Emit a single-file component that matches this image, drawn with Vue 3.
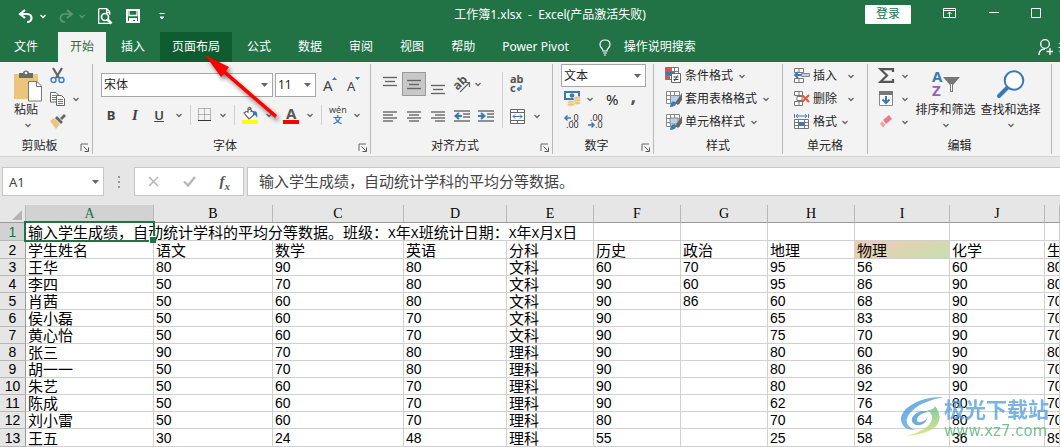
<script setup>
import { h, ref } from 'vue'

const line = (x1, y1, x2) => `<path d="M${x1} ${y1}H${x2}" />`
const bars = (rows) =>
  `<g stroke="#666" stroke-width="1.4">${rows.map(([a, y, b]) => line(a, y, b)).join('')}</g>`

const tableGrid =
  '<path d="M1.5 1.5h13v12h-13zM1.5 5.5h13M1.5 9.5h13M5.5 1.5v12M9.5 1.5v12" fill="#fff" stroke="#888"/>'
const brush =
  '<path d="M17 3v7l-4 5-3-2z" fill="#666"/><path d="M5 17c1-6 3-6 5-5 2 1 1 5-5 5z" fill="#3a78b8"/>'

const shapes = {
  chevron: '<path d="M1.5 2l2.5 2.5L6.500 2" fill="none" stroke="currentColor" stroke-width="1.3"/>',
  caret: '<path d="M0 1h7L3.500 5z" fill="#666"/>',
  launcher:
    '<path d="M1 8V1h7" fill="none" stroke="#666"/><path d="M3.500 3.500l4 4M8.500 4.500v4h-4" fill="none" stroke="#555"/>',
  undo: '<path d="M7 1L2 5l5 4M2 5h7c6 0 6 8 0 8" fill="none" stroke="#fff" stroke-width="2.200"/>',
  redo: '<path d="M10 1l5 4-5 4M15 5H8c-6 0-6 8 0 8" fill="none" stroke="#5b9a74" stroke-width="1.700"/>',
  preview:
    '<path d="M.7 .7h8l3 3v3M.7 .7v14.600h11M8.700 .7v4h3" fill="none" stroke="#fff" stroke-width="1.300"/><circle cx="7" cy="9" r="3.500" fill="none" stroke="#fff" stroke-width="1.700"/><path d="M9.500 11.500l4 4" stroke="#fff" stroke-width="2.600"/>',
  save: '<path d="M1 1h12v12H1z" fill="none" stroke="#fff" stroke-width="2"/><path d="M3 1v5.500h8V1" fill="none" stroke="#fff" stroke-width="1.300"/><path d="M3 9h8v4H9v-2H7v2H3z" fill="#fff"/>',
  customize: '<path d="M.5 .5h5M1 4h4L3 6z" stroke="#fff" fill="#fff"/>',
  ribbonBox:
    '<path d="M.5 .5h12v9H.5zM.5 2.500h12M6.500 9V4M4.500 6l2-2 2 2" fill="none" stroke="#fff"/>',
  minimize: '<path d="M0 4.500h10" stroke="#fff"/>',
  maximize: '<path d="M.5 .5h9v9h-9z" fill="none" stroke="#fff"/>',
  bulb: '<path d="M4 12c0-3-3-3-3-6.500C1 2.500 3 1 6 1s5 1.500 5 4.500C11 9 8 9 8 12zM4 14h4M5 16h2" fill="none" stroke="#fff" stroke-width="1.200"/>',
  person:
    '<circle cx="7" cy="5" r="4.300" fill="none" stroke="#fff" stroke-width="1.300"/><path d="M1 16c0-4 2-6 6-6M12 9v7M8.500 12.500h6.500" fill="none" stroke="#fff" stroke-width="1.300"/>',
  paste:
    '<path d="M1 4h24v25H1z" fill="#ecc47e"/><path d="M6 8V3h4c0-3.500 6-3.500 6 0h4v5z" fill="#6b6b6b"/><circle cx="13" cy="3" r="1.300" fill="#f3f3f3"/><path d="M15.500 11.500h8.500l4.500 4.500v15h-13z" fill="#fff" stroke="#777"/><path d="M23.500 11.500v5h5" fill="none" stroke="#777"/>',
  cut: '<path d="M3 0l6 10M12 0L6 10" stroke="#666" stroke-width="2.300"/><circle cx="3.500" cy="12" r="2.500" fill="none" stroke="#3f7dbd" stroke-width="1.400"/><circle cx="11.500" cy="12" r="2.500" fill="none" stroke="#3f7dbd" stroke-width="1.400"/>',
  copy: '<path d="M.5 .5H6l2.500 2.500v7h-8z" fill="#fff" stroke="#666"/><path d="M2 3.500h4M2 5.500h4M2 7.500h4" stroke="#3f7dbd"/><path d="M6.500 3.500h5l3 3v7h-8z" fill="#fff" stroke="#666"/><path d="M8 7.500h5M8 9.500h5M8 11.500h5" stroke="#3f7dbd"/>',
  painter:
    '<path d="M0 7l4-3 6 6-4 5z" fill="#ecc47e"/><path d="M5 4l2-2 6 6-2 2zM10 4l4-4 2 2-4 4z" fill="#666"/>',
  grow: '<text x="0" y="15" font-size="15" fill="#444">A</text><path d="M9 4l2.500-3L14 4z" fill="#3a78b8"/>',
  shrink: '<text x="0" y="15" font-size="13" fill="#444">A</text><path d="M8 1h5l-2.500 3z" fill="#3a78b8"/>',
  borders:
    '<path d="M.5 .5h12v12H.5zM6.500 .5v12M.5 6.500h12" fill="none" stroke="#777" stroke-dasharray="1 1"/><path d="M0 12.500h13" stroke="#333"/>',
  fill: '<path d="M2 6l6-4 5 5-6 5zM6 6V1.500c0-1.500 3-1.500 3 0V5" fill="#fff" stroke="#666" stroke-width="1.200"/><path d="M11 4c4 0 5 2 4 7-1-3-2-3-4-3z" fill="#3a78b8"/><path d="M0 13h16v4H0z" fill="#ff0"/>',
  fontColor:
    '<text x="3" y="12" font-size="15" font-weight="bold" fill="#555">A</text><path d="M0 13h16v4H0z" fill="#f00"/>',
  phonetic:
    '<text x="0" y="7" font-size="9" fill="#444">wén</text><text x="4" y="17" font-size="9" font-weight="bold" fill="#3a78b8">文</text>',
  top: bars([[0, 1.5, 14], [2, 5.5, 12], [0, 9.5, 14]]),
  left: bars([[0, 1, 14], [0, 4, 10], [0, 7, 14], [0, 10, 10]]),
  center: bars([[0, 1, 14], [2, 4, 12], [0, 7, 14], [2, 10, 12]]),
  right: bars([[0, 1, 14], [4, 4, 14], [0, 7, 14], [4, 10, 14]]),
  outdent:
    bars([[0, 1, 16], [9, 4, 16], [9, 7, 16], [0, 11, 16]]) +
    '<path d="M8 6H2M5 3L1.500 6 5 9" stroke="#3a78b8" stroke-width="2" fill="none"/>',
  indent:
    bars([[0, 1, 16], [9, 4, 16], [9, 7, 16], [0, 11, 16]]) +
    '<path d="M0 6h6M3 3l3.500 3L3 9" stroke="#3a78b8" stroke-width="2" fill="none"/>',
  orient:
    '<text x="0" y="12" font-size="12" font-weight="bold" fill="#555" transform="rotate(-45 5 9)">ab</text><path d="M6 16l9-9M11 6.500h4.500V11" stroke="#666" stroke-width="1.200" fill="none"/>',
  wrap: '<text x="0" y="8" font-size="11" font-weight="bold" fill="#555">ab</text><text x="0" y="17" font-size="11" font-weight="bold" fill="#555">c</text><path d="M11 10v4H8M9.500 12L7.500 14l2 2" stroke="#3a78b8" fill="none" stroke-width="1.300"/>',
  merge:
    '<path d="M.5 .5h14v14H.5zM.5 3.500h14M.5 11.500h14M7.500 .5v3M7.500 11.500v3" fill="#fff" stroke="#666"/><path d="M3 7.500h9M5 5.500l-2 2 2 2M10 5.500l2 2-2 2" stroke="#3a78b8" fill="none"/>',
  currency:
    '<path d="M0 1h16v9H0z" fill="#3a78b8"/><path d="M2 3h12v5H2z" fill="#fff"/><circle cx="8" cy="5.500" r="2.300" fill="#3a78b8"/><g fill="#ecc47e" stroke="#f3f3f3" stroke-width=".5"><ellipse cx="13" cy="8" rx="3.500" ry="1.700"/><ellipse cx="13" cy="10.500" rx="3.500" ry="1.700"/><ellipse cx="13" cy="13" rx="3.500" ry="1.700"/><ellipse cx="7" cy="12" rx="3.500" ry="1.700"/><ellipse cx="7" cy="14.500" rx="3.500" ry="1.700"/></g>',
  addDecimal:
    '<text x="7" y="7" font-size="9" fill="#333">.0</text><text x="2" y="14" font-size="9" fill="#333">.00</text><path d="M7 4H1M3.500 1.500L1 4l2.500 2.500" stroke="#3a78b8" stroke-width="1.500" fill="none"/>',
  cutDecimal:
    '<text x="2" y="7" font-size="9" fill="#333">.00</text><text x="7" y="14" font-size="9" fill="#333">.0</text><path d="M0 11h6M3.500 8.500L6 11l-2.500 2.500" stroke="#3a78b8" stroke-width="1.500" fill="none"/>',
  conditional:
    '<path d="M.5 .5h13v12H.5zM.5 4.500h13M.5 8.500h13M4.500 .5v12M9.500 .5v12" fill="#fff" stroke="#777"/><path d="M1 1h6v3H1zM1 9h3v3H1z" fill="#e0583c"/><path d="M1 5h8v3H1z" fill="#3a78b8"/><path d="M6.500 6.500h9v9h-9z" fill="#fff" stroke="#666"/><path d="M8.500 10h5M8.500 12.500h5M12.500 8.500l-3 5.500" stroke="#444"/>',
  tableStyle: tableGrid + '<path d="M6 6h8v7H6z" fill="#b9d0e6"/>' + brush,
  cellStyle: tableGrid + '<path d="M5 5h8v6H5z" fill="#b9d0e6" stroke="#888"/>' + brush,
  insertCells:
    '<path d="M.5 .5h9v4h-9zM5 .5v4M.5 10.500h9v4h-9zM5 10.500v4" fill="#fff" stroke="#777"/><path d="M7.500 5.500h8v3h-8z" fill="#b9d0e6" stroke="#888"/><path d="M7 7H1M4 4L1 7l3 3" stroke="#3a78b8" stroke-width="1.800" fill="none"/>',
  deleteCells:
    '<path d="M.5 .5h8v4h-8zM5 .5v4M.5 10.500h8v4h-8zM5 10.500v4M3 5.500h5v4H3z" fill="#fff" stroke="#777"/><path d="M8 4l7 7M15 4l-7 7" stroke="#e0583c" stroke-width="2"/>',
  formatCells:
    '<path d="M2 2h11M4 0L2 2l2 2M11 0l2 2-2 2M.5 0v4M14.500 0v4" stroke="#3a78b8" fill="none"/><path d="M.5 5.500h14v9H.5zM.5 8.500h14M.5 11.500h14M4.500 5.500v9M10.500 5.500v9" fill="#fff" stroke="#777"/><path d="M5 8h5v4H5z" fill="#3a78b8"/>',
  sum: '<path d="M14 4V1.200H1.500L8 7.500 1.500 13.800H14V11" fill="none" stroke="#555" stroke-width="2.200"/>',
  fillDown:
    '<path d="M.5 .5h13v14H.5z" fill="#fff" stroke="#888"/><path d="M0 0h14v4H0z" fill="#777"/><path d="M7 5v7M3.500 8.500L7 12l3.500-3.500" stroke="#3a78b8" stroke-width="2" fill="none"/>',
  eraser: '<path d="M4 5l6-5 3 4-6 5z" fill="#e8798f"/><path d="M3 6l3.500 4L4 12.500 1 9z" fill="#f0a3b1"/>',
  sort: '<text x="1" y="12" font-size="15" font-weight="bold" fill="#3a78b8">A</text><text x="1" y="26" font-size="15" font-weight="bold" fill="#9560b8">Z</text><path d="M12 7h17l-7 8v7h-3v-7z" fill="#777"/><path d="M20.500 14v7" stroke="#fff"/>',
  find: '<path d="M11 17L2 26" stroke="#3a78b8" stroke-width="4" stroke-linecap="round"/><circle cx="17" cy="10.500" r="9.300" fill="#fff" stroke="#3a78b8" stroke-width="2"/>',
  dots: '<path d="M1 0v2M1 5v2M1 10v2" stroke="#999" stroke-width="2"/>',
  cancel: '<path d="M1 1l9 9M10 1l-9 9" stroke="#b5b5b5" stroke-width="1.500"/>',
  enter: '<path d="M1 5.500L5 9.500 12 1" stroke="#b5b5b5" stroke-width="2.200" fill="none"/>',
  corner: '<path d="M10 0v10H0z" fill="#b4b4b4"/>',
}

const Icon = (p) =>
  h('svg', {
    width: p.w,
    height: p.h,
    viewBox: `0 0 ${p.w} ${p.h}`,
    'aria-hidden': 'true',
    innerHTML: shapes[p.n],
  })
Icon.props = ['n', 'w', 'h']
const Chev = () => h(Icon, { n: 'chevron', w: 8, h: 6, class: 'chev' })

const tabs = ['文件', '开始', '插入', '页面布局', '公式', '数据', '审阅', '视图', '帮助', 'Power Pivot']
const styleItems = [
  ['conditional', '条件格式'],
  ['tableStyle', '套用表格格式'],
  ['cellStyle', '单元格样式'],
]
const cellItems = [
  ['insertCells', '插入'],
  ['deleteCells', '删除'],
  ['formatCells', '格式'],
]
const editItems = [
  ['sum', '自动求和', 16, 15],
  ['fillDown', '填充', 14, 15],
  ['eraser', '清除', 14, 13],
]

const nameBox = ref('A1')
const formula = ref('输入学生成绩，自动统计学科的平均分等数据。')
const letters = ['A', 'B', 'C', 'D', 'E', 'F', 'G', 'H', 'I', 'J', '']
const title = '输入学生成绩，自动统计学科的平均分等数据。班级：X年X班统计日期：X年X月X日'.split(/(X)/)
const rows = [
  ['学生姓名', '语文', '数学', '英语', '分科', '历史', '政治', '地理', '物理', '化学', '生物'],
  ['王华', 80, 90, 80, '文科', 60, 70, 95, 56, 60, 80],
  ['李四', 50, 70, 80, '文科', 90, 60, 95, 86, 90, 80],
  ['肖茜', 50, 60, 80, '文科', 90, 86, 60, 68, 90, 70],
  ['侯小磊', 50, 60, 70, '文科', 90, '', 65, 83, 80, 70],
  ['黄心怡', 50, 60, 70, '文科', 90, '', 75, 70, 90, 70],
  ['张三', 90, 70, 80, '理科', 90, '', 80, 60, 90, 80],
  ['胡一一', 50, 70, 80, '理科', 90, '', 80, 86, 90, 70],
  ['朱艺', 50, 60, 70, '理科', 90, '', 80, 92, 90, 70],
  ['陈成', 50, 60, 70, '理科', 90, '', 62, 76, 80, 70],
  ['刘小雷', 50, 60, 70, '理科', 80, '', 70, 64, 80, 70],
  ['王五', 30, 24, 48, '理科', 55, '', 25, 58, 36, 89],
]
</script>

<template>
  <div class="app">
    <header class="titlebar">
      <div class="quick">
        <button class="undo" aria-label="撤消"><Icon n="undo" :w="16" :h="15" /></button>
        <Chev class="light" />
        <button class="redo" aria-label="恢复"><Icon n="redo" :w="16" :h="15" /></button>
        <Chev class="dim" />
        <button class="preview" aria-label="打印预览"><Icon n="preview" :w="14" :h="16" /></button>
        <button class="save" aria-label="保存"><Icon n="save" :w="14" :h="14" /></button>
        <button aria-label="自定义"><Icon n="customize" :w="6" :h="7" /></button>
      </div>
      <div class="doc">工作簿1.xlsx&nbsp; -&nbsp; Excel(产品激活失败)</div>
      <div class="window">
        <button class="login">登录</button>
        <button aria-label="功能区显示选项"><Icon n="ribbonBox" :w="13" :h="10" /></button>
        <button aria-label="最小化"><Icon n="minimize" :w="10" :h="10" /></button>
        <button aria-label="最大化"><Icon n="maximize" :w="10" :h="10" /></button>
      </div>
    </header>

    <nav class="tabs">
      <button v-for="t in tabs" :key="t" class="tab" :class="{ active: t === '开始', hover: t === '页面布局' }">{{ t }}</button>
      <button class="tell"><Icon n="bulb" :w="12" :h="17" />操作说明搜索</button>
      <button class="share"><Icon n="person" :w="16" :h="17" />共享</button>
    </nav>

    <section class="ribbon">
      <div class="group clipboard">
        <div class="body">
          <button class="paste"><Icon n="paste" :w="30" :h="32" /><span>粘贴</span><Chev /></button>
          <div class="stack">
            <button aria-label="剪切"><Icon n="cut" :w="15" :h="15" /></button>
            <button aria-label="复制"><Icon n="copy" :w="16" :h="14" /><Chev class="gap" /></button>
            <button aria-label="格式刷"><Icon n="painter" :w="16" :h="15" /></button>
          </div>
        </div>
        <footer><span>剪贴板</span><Icon n="launcher" :w="9" :h="9" /></footer>
      </div>

      <div class="group font">
        <div class="body column">
          <div class="line">
            <label class="combo family"><select aria-label="字体"><option>宋体</option></select><Icon n="caret" :w="7" :h="6" /></label>
            <label class="combo size"><select aria-label="字号"><option>11</option></select><Icon n="caret" :w="7" :h="6" /></label>
            <button class="grow" aria-label="增大字号"><Icon n="grow" :w="15" :h="18" /></button>
            <button aria-label="减小字号"><Icon n="shrink" :w="15" :h="18" /></button>
          </div>
          <div class="line tools">
            <button class="letter"><b>B</b></button>
            <button class="letter"><i>I</i></button>
            <button class="letter"><u>U</u></button>
            <Chev /><hr />
            <button aria-label="边框"><Icon n="borders" :w="14" :h="14" /></button>
            <Chev /><hr />
            <button aria-label="填充颜色"><Icon n="fill" :w="16" :h="17" /></button>
            <Chev />
            <button class="color" aria-label="字体颜色"><Icon n="fontColor" :w="16" :h="17" /></button>
            <Chev /><hr />
            <button aria-label="拼音"><Icon n="phonetic" :w="17" :h="19" /></button>
            <Chev />
          </div>
        </div>
        <footer><span>字体</span><Icon n="launcher" :w="9" :h="9" /></footer>
      </div>

      <div class="group align">
        <div class="body">
          <div class="column aligns">
            <div class="line">
              <button class="up" aria-label="顶端对齐"><Icon n="top" :w="14" :h="11" /></button>
              <button class="on" aria-label="垂直居中"><Icon n="top" :w="14" :h="11" /></button>
              <button class="down" aria-label="底端对齐"><Icon n="top" :w="14" :h="11" /></button>
              <button aria-label="方向"><Icon n="orient" :w="17" :h="17" /></button>
              <Chev />
            </div>
            <div class="line">
              <button aria-label="左对齐"><Icon n="left" :w="14" :h="11" /></button>
              <button aria-label="居中"><Icon n="center" :w="14" :h="11" /></button>
              <button aria-label="右对齐"><Icon n="right" :w="14" :h="11" /></button>
              <button aria-label="减少缩进"><Icon n="outdent" :w="16" :h="12" /></button>
              <button aria-label="增加缩进"><Icon n="indent" :w="16" :h="12" /></button>
            </div>
          </div>
          <hr class="tall" />
          <div class="column merges">
            <div class="line"><button aria-label="自动换行"><Icon n="wrap" :w="15" :h="18" /></button></div>
            <div class="line"><button aria-label="合并后居中"><Icon n="merge" :w="15" :h="15" /></button><Chev /></div>
          </div>
        </div>
        <footer><span>对齐方式</span><Icon n="launcher" :w="9" :h="9" /></footer>
      </div>

      <div class="group number">
        <div class="body stack">
          <label class="combo format"><select aria-label="数字格式"><option>文本</option></select><Icon n="caret" :w="7" :h="6" /></label>
          <div class="line marks">
            <button aria-label="会计数字格式"><Icon n="currency" :w="17" :h="17" /></button>
            <Chev />
            <button class="percent">%</button>
            <button class="comma">,</button>
          </div>
          <div class="line decimals">
            <button aria-label="增加小数位数"><Icon n="addDecimal" :w="16" :h="15" /></button>
            <button aria-label="减少小数位数"><Icon n="cutDecimal" :w="16" :h="15" /></button>
          </div>
        </div>
        <footer><span>数字</span><Icon n="launcher" :w="9" :h="9" /></footer>
      </div>

      <div class="group styles">
        <div class="body stack">
          <button v-for="[icon, text] in styleItems" :key="icon"><Icon :n="icon" :w="17" :h="17" />{{ text }}<Chev /></button>
        </div>
        <footer><span>样式</span></footer>
      </div>

      <div class="group cells">
        <div class="body stack">
          <button v-for="[icon, text] in cellItems" :key="icon"><Icon :n="icon" :w="16" :h="15" />{{ text }}<Chev /></button>
        </div>
        <footer><span>单元格</span></footer>
      </div>

      <div class="group editing">
        <div class="body">
          <div class="stack">
            <button v-for="[icon, text, w, ht] in editItems" :key="icon" :aria-label="text"><Icon :n="icon" :w="w" :h="ht" /><Chev /></button>
          </div>
          <button class="big"><Icon n="sort" :w="30" :h="28" /><span>排序和筛选</span><Chev /></button>
          <button class="big"><Icon n="find" :w="28" :h="28" /><span>查找和选择</span><Chev /></button>
        </div>
        <footer><span>编辑</span></footer>
      </div>
    </section>

    <section class="formula">
      <label class="combo name"><input v-model="nameBox" aria-label="名称框" /><Icon n="caret" :w="7" :h="6" /></label>
      <Icon n="dots" :w="2" :h="12" />
      <div class="actions">
        <button aria-label="取消"><Icon n="cancel" :w="11" :h="11" /></button>
        <button aria-label="输入"><Icon n="enter" :w="13" :h="11" /></button>
        <button class="fx" aria-label="插入函数"><i>f<sub>x</sub></i></button>
      </div>
      <input v-model="formula" class="entry" aria-label="编辑栏" />
    </section>

    <table class="sheet">
      <colgroup>
        <col class="c-num" /><col class="c-a" /><col class="c-b" /><col class="c-c" /><col class="c-d" />
        <col class="c-m" /><col class="c-m" /><col class="c-m" /><col class="c-m" />
        <col class="c-i" /><col class="c-i" /><col />
      </colgroup>
      <thead>
        <tr>
          <th class="corner"><Icon n="corner" :w="10" :h="10" /></th>
          <th v-for="l in letters" :key="l" scope="col" :class="{ picked: l === 'A' }">{{ l }}</th>
        </tr>
      </thead>
      <tbody>
        <tr class="roomy">
          <th scope="row" class="picked">1</th>
          <td colspan="5" class="heading">
            <template v-for="(s, i) in title" :key="i"><span v-if="s === 'X'" class="latin">X</span><template v-else>{{ s }}</template></template>
            <span class="selection"></span>
          </td>
          <td v-for="n in 6" :key="n"></td>
        </tr>
        <tr v-for="(r, i) in rows" :key="i" :class="{ roomy: i === 0 || i === 11 }">
          <th scope="row">{{ i + 2 }}</th>
          <td v-for="(v, j) in r" :key="j" :class="{ tinted: i === 0 && j === 8, digits: typeof v === 'number' }">{{ v }}</td>
        </tr>
      </tbody>
    </table>

    <svg class="pointer" width="90" height="80" viewBox="0 0 90 80" aria-hidden="true">
      <path d="M7 6l24 12-3 4 51 44-2 3-51-44-3 3z" fill="#f00" />
    </svg>

    <div class="brand">
      <svg width="44" height="44" viewBox="0 0 44 44" aria-hidden="true">
        <defs>
          <linearGradient id="sky" x2="1" y2="1"><stop stop-color="#2f86d6" /><stop offset="1" stop-color="#72bdf0" /></linearGradient>
          <linearGradient id="leaf" x2="0" y2="1"><stop stop-color="#58b989" /><stop offset="1" stop-color="#d8e064" /></linearGradient>
        </defs>
        <path d="M43 1C21 0 0 12 1 24c1 7 6 10 14 10C4 29 5 22 12 15 20 7 31 4 43 1z" fill="url(#sky)" />
        <path d="M35 10c10 13 5 28-30 30 16-3 27-11 27-18 0-4-2-6-5-8 4 0 7-1 8-4z" fill="url(#leaf)" />
        <path d="M29 16c-8-4-21 4-16 11 4 5 14 1 14-5-2 4-10 6-10 2 0-4 6-8 12-8z" fill="#3f92d8" />
      </svg>
      <div class="brand-text"><strong>极光下载站</strong><span>www.xz7.com</span></div>
    </div>
  </div>
</template>

<style>
html,
body {
  background: #fff;
  overflow: hidden;
}
</style>

<style scoped>
.app {
  position: relative;
  overflow: hidden;
  font: 12px/16px 'Noto Sans', 'Noto Sans CJK SC', sans-serif;
  color: #262626;
}
.app * {
  box-sizing: border-box;
}
svg {
  display: block;
  flex: none;
  overflow: visible;
}
button {
  display: flex;
  align-items: center;
  justify-content: center;
  flex: none;
  padding: 0;
  border: 0;
  background: none;
  font: inherit;
  color: inherit;
  white-space: nowrap;
}
input,
select {
  font: inherit;
  color: inherit;
  border: 0;
  border-radius: 0;
  background: none;
  outline: 0;
  appearance: none;
  min-width: 0;
}
hr {
  width: 1px;
  height: 20px;
  margin: 0;
  border: 0;
  background: #d0d0d0;
}
.chev {
  color: #666;
}

/* title bar */
.titlebar {
  display: flex;
  height: 32px;
  background: #217346;
  color: #fff;
}
.quick {
  display: flex;
  align-items: center;
  width: 240px;
  padding-left: 18px;
}
.undo,
.redo {
  margin-right: 5px;
}
.light {
  color: #fff;
}
.dim {
  color: #5b9a74;
}
.redo {
  margin-left: 10px;
}
.preview {
  margin-left: 12px;
}
.save {
  margin: 0 19px 0 14px;
}
.doc {
  flex: 1;
  text-align: center;
  line-height: 30px;
  white-space: nowrap;
}
.window {
  display: flex;
  justify-content: space-between;
  width: 200px;
  height: 26px;
  padding: 0 19px 0 5px;
}
.login {
  align-self: center;
  width: 46px;
  height: 19px;
  margin-top: 2px;
  border-radius: 1px;
  background: #fff;
  color: #217346;
}
.window svg {
  margin: auto;
}

/* tabs */
.tabs {
  display: flex;
  height: 30px;
  padding-left: 2px;
  background: #217346;
  color: #fff;
  overflow: hidden;
}
.tab {
  padding: 0 12px;
  margin-right: 3px;
}
.tab:first-child {
  margin-right: 8px;
}
.active {
  background: #f3f3f3;
  color: #217346;
}
.hover {
  background: #0f5c30;
}
.tell {
  gap: 13px;
  margin: 0 auto 0 15px;
}
.share {
  gap: 4px;
  width: 22px;
  justify-content: flex-start;
}

/* ribbon */
.ribbon {
  display: flex;
  height: 95px;
  padding: 2px 0;
  background: #f3f3f3;
  border-bottom: 1px solid #d2d2d2;
  color: #262626;
}
.group {
  display: flex;
  flex-direction: column;
  flex: none;
  border-right: 1px solid #b8b8b8;
}
.body {
  display: flex;
  height: 72px;
}
.column {
  display: flex;
  flex-direction: column;
}
.line {
  display: flex;
  align-items: center;
}
.stack {
  display: flex;
  flex-direction: column;
}
.stack > * {
  height: 23px;
}
.stack button {
  justify-content: flex-start;
}
footer {
  display: flex;
  align-items: center;
  padding: 0 3px;
}
footer span {
  flex: 1;
  margin-top: 2px;
  text-align: center;
}
footer svg {
  margin: 4px 0 0 4px;
}
.combo {
  display: grid;
  align-items: center;
  border: 1px solid #a6a6a6;
  background: #fff;
}
.combo > * {
  grid-area: 1 / 1;
}
.combo select,
.combo input {
  width: 100%;
  height: 100%;
  padding: 0 2px;
}
.combo svg {
  justify-self: end;
  margin-right: 4px;
}

.clipboard {
  width: 93px;
}
.paste {
  flex-direction: column;
  justify-content: flex-start;
  width: 48px;
  padding: 6px 0 0 8px;
  margin-right: 2px;
}
.paste span {
  margin: 0 4px 0 0;
}
.paste svg:last-child {
  margin-top: 4px;
}
.gap {
  margin-left: 6px;
}

.font {
  width: 278px;
}
.font .body {
  padding: 9px 0 0 8px;
}
.family {
  width: 172px;
  height: 24px;
}
.size {
  width: 41px;
  height: 24px;
  margin-left: 2px;
}
.grow {
  margin: 0 9px 0 7px;
}
.tools {
  height: 36px;
  gap: 7px;
  padding-left: 2px;
  color: #444;
}
.letter {
  width: 16px;
  margin-right: 1px;
  font-size: 13px;
}
.letter u {
  font-weight: 600;
}
.letter i {
  font-family: 'Liberation Serif', serif;
  font-weight: bold;
  font-size: 15px;
}
.color {
  margin-left: 3px;
}

.align {
  width: 182px;
}
.align .line {
  height: 32px;
}
.align .body {
  padding-top: 4px;
}
.aligns {
  width: 131px;
  padding-left: 7px;
}
.aligns button {
  width: 24px;
}
.up {
  padding-bottom: 6px;
}
.down {
  padding-top: 10px;
}
.on {
  height: 24px;
  background: #c8c8c8;
  border: 1px solid #999;
}
.tall {
  height: 56px;
  margin-top: 4px;
}
.merges {
  padding-left: 7px;
}
.merges button + svg {
  margin-left: 8px;
}

.number {
  width: 101px;
}
.number .body {
  padding-left: 8px;
}
.format {
  width: 85px;
}
.marks,
.decimals {
  padding-left: 3px;
}
.marks {
  gap: 5px;
}
.percent {
  font-size: 15px;
  margin: 0 7px;
}
.comma {
  font-size: 20px;
  font-weight: bold;
  color: #555;
  line-height: 10px;
  padding-bottom: 8px;
}
.decimals {
  gap: 8px;
}

.styles {
  width: 129px;
}
.styles .body {
  padding-left: 11px;
}
.styles button,
.cells button {
  gap: 3px;
}
.styles button svg:last-child {
  margin-left: 2px;
}
.cells {
  width: 85px;
}
.cells .body {
  padding-left: 11px;
}
.cells button svg:last-child {
  margin-left: 7px;
}
.cells button:last-child svg:last-child {
  margin-left: 1px;
}

.editing {
  width: 184px;
}
.editing .body {
  padding-left: 11px;
}
.editing .stack {
  width: 34px;
}
.editing .stack button {
  justify-content: space-between;
  width: 30px;
}
.big {
  flex-direction: column;
  justify-content: flex-start;
  width: 65px;
  padding-top: 6px;
}
.big span {
  margin: 4px 0;
}

/* formula bar */
.formula {
  display: flex;
  align-items: center;
  height: 48px;
  padding: 10px 0 9px 2px;
  background: #e6e6e6;
}
.formula > .combo,
.actions,
.entry {
  height: 29px;
  border: 1px solid #c6c6c6;
  background: #fff;
}
.name {
  width: 102px;
  font-size: 13px;
  color: #444;
}
.name input {
  padding-left: 6px;
}
.formula > svg {
  margin: 0 14px;
}
.actions {
  display: flex;
  align-items: center;
  justify-content: space-between;
  width: 110px;
  padding: 0 13px;
  margin-right: 3px;
}
.fx {
  font: bold 15px/16px 'Liberation Serif', serif;
  color: #555;
}
.fx sub {
  font-size: 11px;
  line-height: 10px;
}
.entry {
  flex: 1;
  padding: 0 0 3px 11px;
  border-right: 0;
  font-size: 15px;
  color: #444;
}

/* sheet */
.sheet {
  width: 100%;
  table-layout: fixed;
  border-collapse: separate;
  border-spacing: 0;
  color: #000;
  font: 15px/16px 'Noto Sans CJK SC', sans-serif;
}
.c-num {
  width: 26px;
}
.c-a {
  width: 128px;
}
.c-b {
  width: 119px;
}
.c-c {
  width: 131px;
}
.c-d {
  width: 103px;
}
.c-m {
  width: 87px;
}
.c-i {
  width: 95px;
}
.sheet th,
.sheet td {
  height: 17px;
  padding: 0;
  border-right: 1px solid #d0d0d0;
  border-bottom: 1px solid #d0d0d0;
  font-weight: normal;
  white-space: nowrap;
  overflow: hidden;
}
.sheet td {
  padding-left: 2px;
}
.sheet .digits,
.sheet tbody th {
  font: 14px/16px 'Liberation Sans', sans-serif;
}
.sheet .roomy th,
.sheet .roomy td,
.sheet thead th {
  height: 18px;
}
.sheet th {
  background: #e6e6e6;
  border-color: #b8b8b8;
}
.sheet tbody th {
  border-right-color: #999;
}
.sheet thead th {
  border-bottom-color: #999;
  font: 14px/16px 'Liberation Serif', serif;
}
.sheet th.picked {
  background: #d2d2d2;
  color: #217346;
}
.corner svg {
  margin: 2px 3px 0 auto;
}
.sheet .heading {
  position: relative;
  overflow: visible;
}
.latin {
  font: 13px/1px 'Liberation Mono', monospace;
}
.selection {
  position: absolute;
  left: -2px;
  top: -2px;
  width: 131px;
  height: 21px;
  border: 2px solid #217346;
}
.selection::after {
  content: '';
  position: absolute;
  right: -3px;
  bottom: -3px;
  width: 6px;
  height: 6px;
  background: #217346;
  border: solid #fff;
  border-width: 1px 0 0 1px;
}
.tinted {
  background: linear-gradient(160deg, #f5cbad, #c5dfb3);
}

/* overlays */
.pointer {
  position: absolute;
  left: 198px;
  top: 49px;
  filter: drop-shadow(2px 3px 2px rgba(0, 0, 0, 0.5));
}
.brand {
  position: absolute;
  right: 11px;
  bottom: 7px;
  display: flex;
  align-items: flex-start;
  opacity: 0.75;
}
.brand-text {
  display: flex;
  flex-direction: column;
  color: #4f9ad8;
}
.brand strong {
  font-size: 21px;
  line-height: 26px;
}
.brand span {
  font: 15px/18px 'DejaVu Sans', sans-serif;
  color: #4cb06c;
}
</style>
